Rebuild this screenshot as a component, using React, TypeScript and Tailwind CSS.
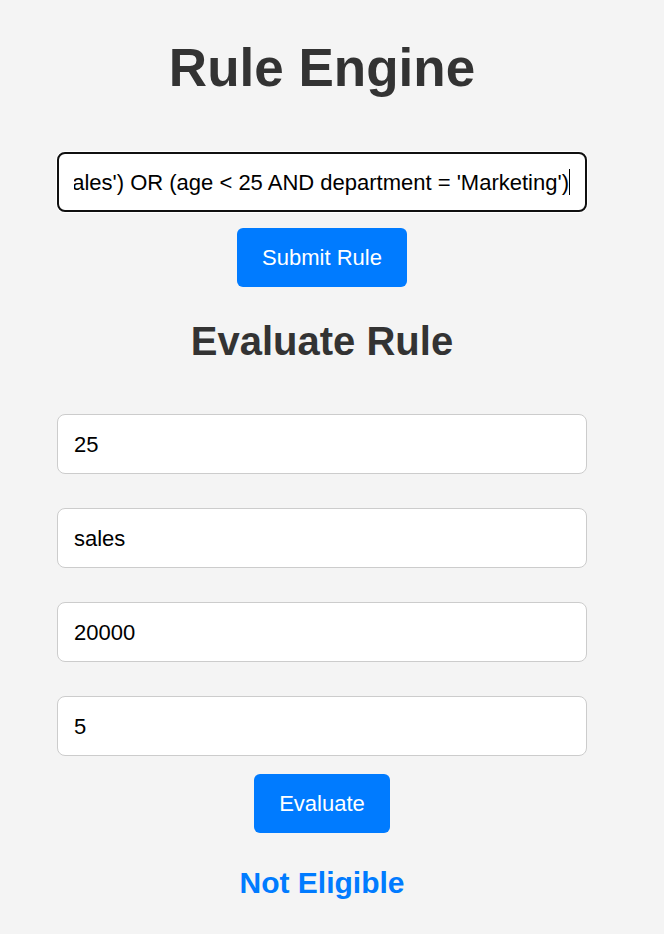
import React from "react";

export default function App() {
  const rule =
    "(age > 30 AND department = 'Sales') OR (age < 25 AND department = 'Marketing')";
  const values = ["25", "sales", "20000", "5"];
  return (
    <div
      className="min-h-screen bg-[#f4f4f4] pt-[38px]"
      style={{ fontFamily: '"Liberation Sans", Arial, sans-serif' }}
    >
      <div className="w-[644px] flex flex-col items-center">
        <h1 className="text-[53px] leading-[60px] font-bold text-[#333333]">
          Rule Engine
        </h1>
        <div className="mt-[54px] w-[530px] h-[60px] flex items-center px-[15px] bg-white border-2 border-[#101010] rounded-lg shadow-[0_0_0_1px_#ffffff]">
          <div className="flex-1 overflow-hidden flex justify-end items-center whitespace-nowrap text-[22px] text-black">
            <span>{rule}</span>
            <span className="inline-block w-px h-[26px] bg-black shrink-0" />
          </div>
        </div>
        <button className="mt-[16px] h-[59px] px-[25px] bg-[#007bff] text-white text-[22px] rounded-md">
          Submit Rule
        </button>
        <h2 className="mt-[31px] text-[40px] leading-[46px] font-bold text-[#333333]">
          Evaluate Rule
        </h2>
        <div className="mt-[50px] flex flex-col gap-[34px]">
          {values.map((v) => (
            <div
              key={v}
              className="w-[530px] h-[60px] flex items-center px-[16px] bg-white border border-[#cccccc] rounded-lg text-[22px] text-black"
            >
              {v}
            </div>
          ))}
        </div>
        <button className="mt-[18px] h-[59px] px-[25px] bg-[#007bff] text-white text-[22px] rounded-md">
          Evaluate
        </button>
        <div className="mt-[32px] text-[30px] leading-[36px] font-bold text-[#007bff]">
          Not Eligible
        </div>
      </div>
    </div>
  );
}
